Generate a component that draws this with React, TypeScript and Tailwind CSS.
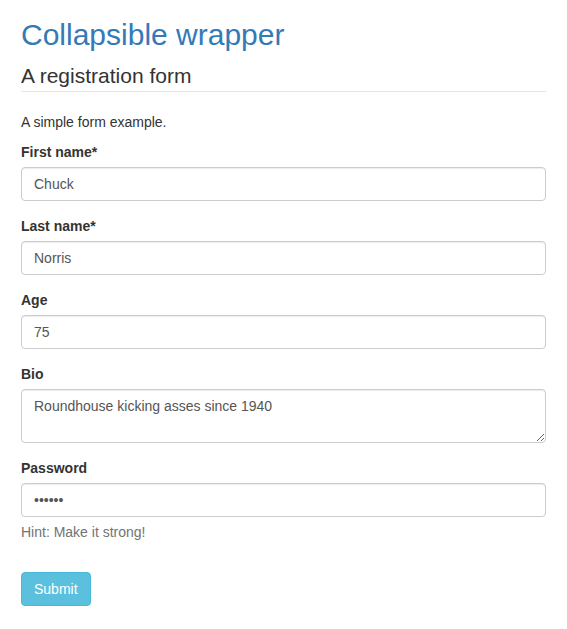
import React from "react";

const inputCls =
  "block w-full h-[34px] px-[12px] py-[6px] text-[14px] leading-[20px] text-[#555] bg-white border border-[#ccc] rounded-[4px] shadow-[inset_0_1px_1px_rgba(0,0,0,0.075)] outline-none";

function Label({ children }: { children: React.ReactNode }) {
  return (
    <label className="block mb-[5px] font-bold text-[14px] leading-[20px] text-[#333]">
      {children}
    </label>
  );
}

export default function App() {
  return (
    <div
      className="bg-white text-[#333] text-[14px] leading-[20px] px-[21px] pt-[18px] min-h-[629px]"
      style={{ fontFamily: '"Liberation Sans", Arial, Helvetica, sans-serif' }}
    >
      <h1 className="text-[30px] leading-[33px] text-[#337ab7] font-normal mb-[10px]">
        Collapsible wrapper
      </h1>
      <form onSubmit={(e) => e.preventDefault()}>
        <div className="text-[21px] leading-[30px] text-[#333] border-b border-[#e5e5e5] mb-[20px]">
          A registration form
        </div>
        <p className="mb-[10px]">A simple form example.</p>
        <div className="mb-[15px]">
          <Label>First name*</Label>
          <input type="text" className={inputCls} defaultValue="Chuck" readOnly />
        </div>
        <div className="mb-[15px]">
          <Label>Last name*</Label>
          <input type="text" className={inputCls} defaultValue="Norris" readOnly />
        </div>
        <div className="mb-[15px]">
          <Label>Age</Label>
          <input type="text" className={inputCls} defaultValue="75" readOnly />
        </div>
        <div className="mb-[15px]">
          <Label>Bio</Label>
          <textarea
            rows={2}
            className="block w-full h-[54px] px-[12px] py-[6px] text-[14px] leading-[20px] text-[#555] bg-white border border-[#ccc] rounded-[4px] shadow-[inset_0_1px_1px_rgba(0,0,0,0.075)] outline-none resize-y"
            defaultValue="Roundhouse kicking asses since 1940"
            readOnly
          />
        </div>
        <div className="mb-[15px]">
          <Label>Password</Label>
          <input type="password" className={inputCls} defaultValue="123456" readOnly />
          <p className="mt-[5px] text-[#737373]">Hint: Make it strong!</p>
        </div>
        <div className="pt-[15px]">
          <button
            type="submit"
            className="inline-block h-[34px] px-[12px] py-[6px] text-[14px] leading-[20px] text-white bg-[#5bc0de] border border-[#46b8da] rounded-[4px]"
          >
            Submit
          </button>
        </div>
      </form>
    </div>
  );
}
